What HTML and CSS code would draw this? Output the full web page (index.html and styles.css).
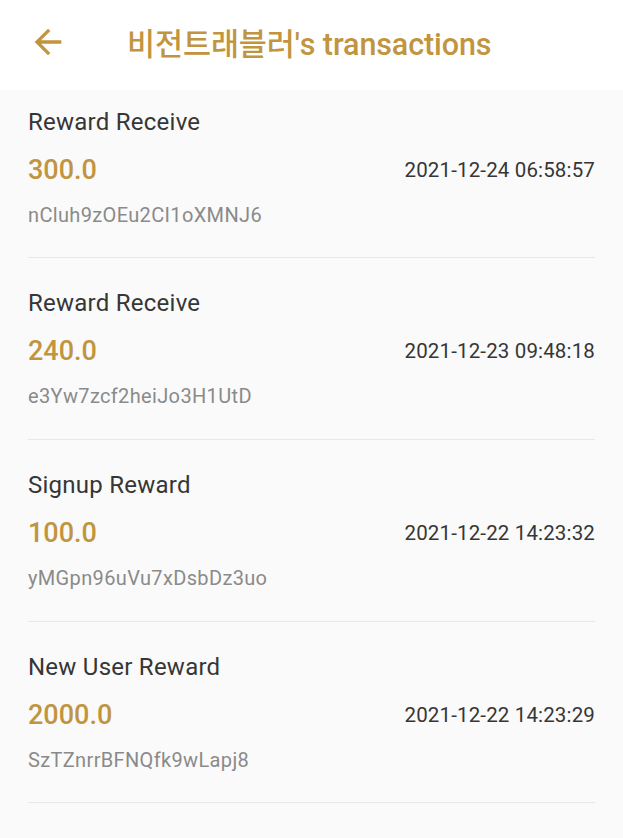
FILE: index.html
```html
<!DOCTYPE html>
<html lang="ko">
<head>
  <meta charset="UTF-8" />
  <meta name="viewport" content="width=device-width, initial-scale=1.0"/>
  <title>Transactions</title>
  <link rel="stylesheet" href="styles.css">
</head>
<body>
  <header class="topbar">
    <button class="back" aria-label="back">
      <svg viewBox="0 0 24 24" width="40" height="40"><path d="M20 11H7.83l5.59-5.59L12 4l-8 8 8 8 1.41-1.41L7.83 13H20v-2z" fill="currentColor"/></svg>
    </button>
    <h1>비전트래블러's transactions</h1>
  </header>

  <div class="list">
    <div class="item">
      <div class="kind">Reward Receive</div>
      <div class="row">
        <span class="amount">300.0</span>
        <span class="date">2021-12-24 06:58:57</span>
      </div>
      <div class="txid">nCluh9zOEu2CI1oXMNJ6</div>
    </div>
    <div class="item">
      <div class="kind">Reward Receive</div>
      <div class="row">
        <span class="amount">240.0</span>
        <span class="date">2021-12-23 09:48:18</span>
      </div>
      <div class="txid">e3Yw7zcf2heiJo3H1UtD</div>
    </div>
    <div class="item">
      <div class="kind">Signup Reward</div>
      <div class="row">
        <span class="amount">100.0</span>
        <span class="date">2021-12-22 14:23:32</span>
      </div>
      <div class="txid">yMGpn96uVu7xDsbDz3uo</div>
    </div>
    <div class="item">
      <div class="kind">New User Reward</div>
      <div class="row">
        <span class="amount">2000.0</span>
        <span class="date">2021-12-22 14:23:29</span>
      </div>
      <div class="txid">SzTZnrrBFNQfk9wLapj8</div>
    </div>
  </div>
</body>
</html>
```

FILE: styles.css
```css
html, body {
  margin: 0;
  padding: 0;
  background: #fafafa;
  font-family: Roboto, "Noto Sans CJK KR", sans-serif;
}

.topbar {
  height: 90px;
  box-sizing: border-box;
  padding-bottom: 7px;
  background: #fff;
  display: flex;
  align-items: center;
}

.back {
  border: none;
  background: none;
  padding: 0;
  margin-left: 28px;
  width: 40px;
  height: 40px;
  color: #c1953f;
  display: flex;
}

h1 {
  margin: 0 0 0 59px;
  font-size: 30.5px;
  font-weight: 500;
  color: #c1953f;
  letter-spacing: -0.1px;
}

.list {
  padding: 0 28px;
}

.item {
  padding: 30px 0 30.7px;
  border-bottom: 1px solid #e8e8e8;
}

.item:first-child {
  padding-top: 16.5px;
}

.kind {
  font-size: 24px;
  line-height: 30px;
  letter-spacing: 0.25px;
  color: #363636;
}

.row {
  margin-top: 17px;
  display: flex;
  justify-content: space-between;
  align-items: center;
  height: 32px;
}

.amount {
  font-size: 27px;
  font-weight: 500;
  color: #c1953f;
}

.date {
  font-size: 20.5px;
  letter-spacing: 0.15px;
  color: #363636;
}

.txid {
  margin-top: 17px;
  font-size: 20px;
  line-height: 24px;
  letter-spacing: 0.35px;
  color: #8a8a8a;
}
```
